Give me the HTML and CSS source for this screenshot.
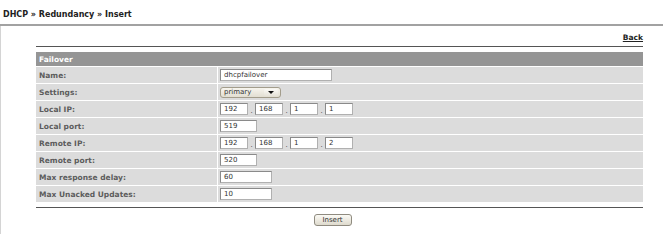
FILE: index.html
```html
<!DOCTYPE html>
<html>
<head>
<meta charset="utf-8">
<title>DHCP Redundancy Insert</title>
<link rel="stylesheet" href="styles.css">
</head>
<body>
<div class="crumb">DHCP » Redundancy » Insert</div>
<div class="main">
  <div class="panel">
    <div class="back-row"><a class="back" href="#">Back</a></div>
    <div class="rule"></div>
    <table class="form">
      <tr class="head"><td colspan="2">Failover</td></tr>
      <tr><td class="lbl">Name:</td><td class="val"><span class="inp w-name">dhcpfailover</span></td></tr>
      <tr><td class="lbl">Settings:</td><td class="val"><span class="sel"><span class="sel-txt">primary</span><span class="sel-btn"><span class="arrow"></span></span></span></td></tr>
      <tr><td class="lbl">Local IP:</td><td class="val"><span class="ip"><span class="inp w-oct">192</span><span class="dot">.</span><span class="inp w-oct">168</span><span class="dot">.</span><span class="inp w-oct">1</span><span class="dot">.</span><span class="inp w-oct">1</span></span></td></tr>
      <tr><td class="lbl">Local port:</td><td class="val"><span class="inp w-port">519</span></td></tr>
      <tr><td class="lbl">Remote IP:</td><td class="val"><span class="ip"><span class="inp w-oct">192</span><span class="dot">.</span><span class="inp w-oct">168</span><span class="dot">.</span><span class="inp w-oct">1</span><span class="dot">.</span><span class="inp w-oct">2</span></span></td></tr>
      <tr><td class="lbl">Remote port:</td><td class="val"><span class="inp w-port">520</span></td></tr>
      <tr><td class="lbl">Max response delay:</td><td class="val"><span class="inp w-num">60</span></td></tr>
      <tr><td class="lbl">Max Unacked Updates:</td><td class="val"><span class="inp w-num">10</span></td></tr>
    </table>
    <div class="rule bottom"></div>
    <div class="actions"><span class="btn">Insert</span></div>
  </div>
</div>
</body>
</html>
```

FILE: styles.css
```css
html, body {
  margin: 0;
  padding: 0;
  background: #fff;
  font-family: "DejaVu Sans", Verdana, sans-serif;
  font-size: 8px;
  color: #333;
}
.crumb {
  font-weight: bold;
  font-size: 8px;
  color: #222;
  padding: 10px 0 0 3px;
  height: 14px;
  border-bottom: 2px solid #a2a2a2;
}
.main {
  border-left: 1px solid #d4d4d4;
  height: 208px;
}
.panel {
  margin: 0 20px 0 35px;
}
.back-row {
  display: flex;
  justify-content: flex-end;
  padding-top: 7px;
  height: 13px;
}
.back {
  font-weight: bold;
  font-size: 7.5px;
  color: #222;
  text-decoration: underline;
}
.rule {
  border-top: 1px solid #555;
  margin-bottom: 5px;
}
.rule.bottom {
  margin: 5px 0 0;
}
.form {
  width: 100%;
  border-collapse: collapse;
}
.form td {
  padding: 0;
  height: 16px;
  border-bottom: 1px solid #fff;
  background: #dcdcdc;
}
.form tr.head td {
  height: 14px;
  background: #959595;
  color: #fff;
  font-weight: bold;
  font-size: 7.5px;
  padding-left: 3px;
}
.form tr:last-child td {
  border-bottom: 0;
}
.lbl {
  width: 178px;
  padding-left: 3px !important;
  font-weight: bold;
  font-size: 7.5px;
  color: #5c5c5c;
  border-right: 1px solid #fff;
}
.val {
  padding-left: 2px !important;
}
.inp {
  display: inline-block;
  box-sizing: border-box;
  height: 12px;
  line-height: 10px;
  padding-left: 3px;
  vertical-align: middle;
  background: #fff;
  border: 1px solid #b0b0b0;
  border-top-color: #8a8a8a;
  border-left-color: #8a8a8a;
  font-size: 7px;
  color: #333;
}
.w-name { width: 112px; }
.w-oct { width: 28px; }
.w-port { width: 37px; }
.w-num { width: 52px; }
.ip {
  display: inline-flex;
  align-items: center;
  vertical-align: middle;
}
.dot {
  width: 7px;
  text-align: center;
  font-size: 7px;
  color: #444;
  padding-top: 3px;
}
.sel {
  display: inline-flex;
  align-items: center;
  box-sizing: border-box;
  width: 61px;
  height: 11px;
  vertical-align: middle;
  border: 1px solid #a39d8c;
  border-radius: 3px;
  background: linear-gradient(#f7f5ee, #e2ded2);
}
.sel-txt {
  flex: 1;
  padding-left: 3px;
  font-size: 7px;
  line-height: 9px;
  color: #333;
}
.sel-btn {
  width: 14px;
  height: 7px;
  margin-right: 2px;
  border-radius: 2px;
  background: linear-gradient(#fbfaf6, #e6e2d8);
  display: flex;
  align-items: center;
  justify-content: center;
}
.arrow {
  width: 0;
  height: 0;
  border-left: 3px solid transparent;
  border-right: 3px solid transparent;
  border-top: 3px solid #111;
}
.actions {
  display: flex;
  justify-content: center;
  padding-top: 6px;
  padding-right: 14px;
}
.btn {
  display: inline-block;
  box-sizing: border-box;
  width: 38px;
  height: 12px;
  line-height: 10px;
  text-align: center;
  font-size: 7px;
  color: #333;
  border: 1px solid #8f8b80;
  border-radius: 3px;
  background: linear-gradient(#fbfaf5, #dedacd);
}
```
